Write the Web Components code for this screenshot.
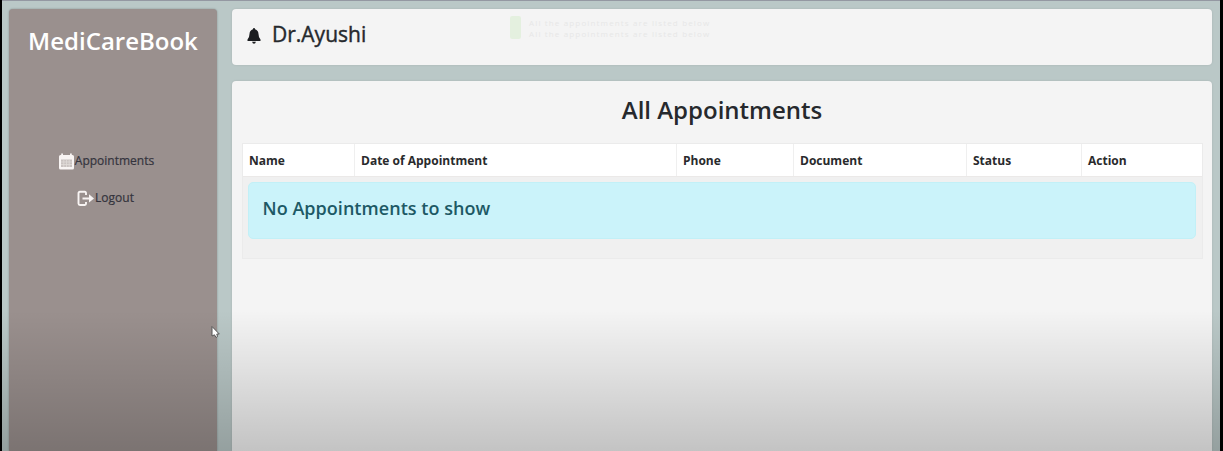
<!DOCTYPE html>
<html lang="en">
<head>
<meta charset="utf-8">
<title>MediCareBook</title>
<style>
html,body{margin:0;height:100%;overflow:hidden;background:#000}
body{font-family:"Open Sans","Noto Sans",sans-serif;color:#26292d}
</style>
</head>
<body>
<medi-app></medi-app>
<script>
function define(name, html) {
  const t = document.createElement('template');
  t.innerHTML = html;
  customElements.define(name, class extends HTMLElement {
    constructor() {
      super();
      this.attachShadow({mode: 'open'}).appendChild(t.content.cloneNode(true));
    }
  });
}

define('medi-nav-item', `<style>
:host{display:flex;align-items:center;justify-content:center;height:37px;font-size:12px;color:#34343d;line-height:16px;white-space:nowrap}
::slotted(svg){display:block;flex:none}
.label{margin-top:-2px;-webkit-text-stroke:.2px #34343d}
</style><slot name="icon"></slot><span class="label"><slot></slot></span>`);

define('medi-sidebar', `<style>
:host{display:block;box-sizing:border-box;width:208px;background:#9a908e;border-radius:4px 4px 0 0;box-shadow:0 0 2px #7f8a8a}
h1{margin:0;padding-top:15px;height:119px;font-size:24px;line-height:34px;font-weight:600;color:#fff;text-align:center}
nav{padding-right:14px}
.logout{padding-right:1px}
</style>
<h1>MediCareBook</h1>
<nav>
<medi-nav-item><svg slot="icon" width="17" height="17" viewBox="0 0 17 17"><path fill="#f8f4f3" d="M3.200 .5h1.800v1.500h7V.5h1.800V2h.7Q16 2 16 3.500V15q0 1.500-1.500 1.500h-12Q1 16.500 1 15V3.500Q1 2 2.500 2h.7z"/><path fill="#c9c2c0" d="M3 6.500h11v7.500H3z"/><path stroke="#e0dad8" stroke-width=".8" d="M5.800 6.500V14M8.500 6.500V14M11.200 6.500V14M3 9h11M3 11.500h11"/></svg>Appointments</medi-nav-item>
<medi-nav-item class="logout"><svg slot="icon" width="18" height="17" viewBox="0 0 18 17"><path fill="none" stroke="#f8f4f3" stroke-width="1.900" d="M9 5V3Q9 1.800 7.800 1.800H3Q1.500 1.800 1.500 3.300V13.500Q1.500 15 3 15H7.800Q9 15 9 13.800V12"/><path fill="#f8f4f3" d="M5.500 7.500H12V4.300L17 8.400L12 12.500V9.400H5.500z"/></svg>Logout</medi-nav-item>
</nav>`);

define('medi-card', `<style>
:host{display:block;box-sizing:border-box;background:#f4f4f4;border-radius:4px;box-shadow:0 0 2px #a4b0b0}
</style><slot></slot>`);

define('medi-header', `<style>
:host{display:flex;position:relative;box-sizing:border-box;height:56px;padding:9px 15px}
.bell{display:block;margin-top:10px;margin-right:11px}
.name{font-size:21px;line-height:32px;-webkit-text-stroke:.4px #26292d}
.toast{position:absolute;left:278px;top:7px;display:flex;gap:8px;font-size:8px;line-height:11px;color:#e7e7e7}
.toast i{width:11px;height:23px;background:#e4f0df;border-radius:2px}
.toast .lines{padding-top:1px}
.toast .lines div{white-space:nowrap;letter-spacing:1.150px}
</style>
<svg class="bell" width="14" height="17" viewBox="0 0 14 17"><path fill="#1b1d20" d="M7 0q1 0 1.100 1.300Q11.300 2.200 11.500 6q.1 4 2 5.500v1.500H.5v-1.500q1.900-1.500 2-5.500Q2.700 2.200 5.900 1.300 6 0 7 0zM5.100 13.800h3.800Q8.500 15.800 7 15.800T5.100 13.800z"/></svg>
<span class="name">Dr.Ayushi</span>
<div class="toast"><i></i><div class="lines"><div>All the appointments are listed below</div><div>All the appointments are listed below</div></div></div>`);

define('medi-table', `<style>
:host{display:block;box-sizing:border-box;width:961px;margin:0 auto;border:1px solid #ebebeb;background:#f0f0f0;height:116px}
.head{display:grid;grid-template-columns:112px 322px 117px 173px 115px 1fr;height:33px;background:#fff;border-bottom:1px solid #ebe9e8;box-sizing:border-box}
.head span{box-sizing:border-box;height:32px;padding-left:6.500px;font-size:12px;line-height:34px;font-weight:700;border-right:1px solid #efefef;white-space:nowrap;color:#292a2c}
.head span:last-child{border:0}
.alert{box-sizing:border-box;height:57px;margin:5px 6px 0 5px;padding:0 14px;border:1px solid #c2f0f7;border-radius:5px;background:#cbf3fa;color:#1d5965;font-size:18px;font-weight:600;line-height:50px;letter-spacing:.040px}
</style>
<div class="head"><span>Name</span><span>Date of Appointment</span><span>Phone</span><span>Document</span><span>Status</span><span>Action</span></div>
<div class="alert">No Appointments to show</div>`);

define('medi-appointments', `<style>
:host{display:block;padding-top:11px}
h2{margin:0 0 16px;font-size:24px;line-height:35px;font-weight:600;text-align:center}
</style><h2>All Appointments</h2><medi-table></medi-table>`);

define('medi-cursor', `<style>:host{position:absolute}svg{display:block}</style>
<svg width="11" height="14" viewBox="0 0 11 14"><path fill="#fff" stroke="#555" stroke-width="1" d="M2 1.500V11l2.500-1.200L6 12.500 7.500 11.500 6.800 9h2.500z"/></svg>`);

define('medi-app', `<style>
:host{display:flex;position:relative;box-sizing:border-box;height:451px;margin:0 3px 0 2px;border-top:1px solid #9498a2;background:#bac8c7;padding:8px 8px 0 7px;gap:15px}
medi-sidebar{flex:none}
main{flex:1;display:flex;flex-direction:column;gap:16px}
.body{flex:1;border-radius:4px 4px 0 0}
.shade{position:absolute;left:0;right:0;bottom:0;height:141px;pointer-events:none;background:linear-gradient(rgba(0,0,0,0),rgba(0,0,0,.085) 45%,rgba(0,0,0,.2))}
medi-cursor{left:208px;top:324px}
</style>
<medi-sidebar></medi-sidebar>
<main><medi-card><medi-header></medi-header></medi-card>
<medi-card class="body"><medi-appointments></medi-appointments></medi-card></main>
<div class="shade"></div><medi-cursor></medi-cursor>`);
</script>
</body>
</html>
